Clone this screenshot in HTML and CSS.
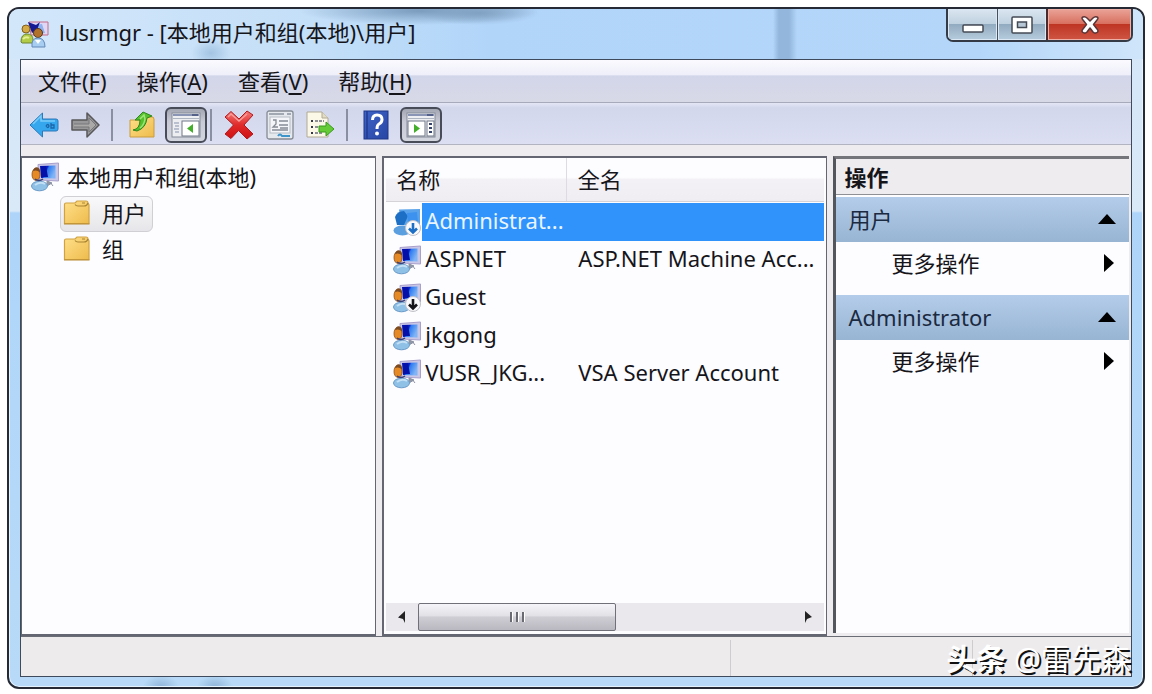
FILE: index.html
```html
<!DOCTYPE html>
<html lang="zh-CN">
<head>
<meta charset="utf-8">
<title>lusrmgr</title>
<link rel="stylesheet" href="styles.css">
</head>
<body>
<svg class="defs" width="0" height="0" aria-hidden="true">
  <defs>
    <linearGradient id="screen" x1="0" y1="0" x2="1" y2="0.4">
      <stop offset="0" stop-color="#0512b8"/><stop offset="0.45" stop-color="#0a1fc8"/><stop offset="0.55" stop-color="#2d7af0"/><stop offset="1" stop-color="#7fb4f6"/>
    </linearGradient>
    <linearGradient id="gold" x1="0" y1="0" x2="1" y2="1">
      <stop offset="0" stop-color="#ffe08a"/><stop offset="1" stop-color="#eebb4c"/>
    </linearGradient>
    <linearGradient id="red" x1="0" y1="0" x2="0" y2="1">
      <stop offset="0" stop-color="#f47a78"/><stop offset="0.5" stop-color="#e02a2a"/><stop offset="1" stop-color="#cf0f12"/>
    </linearGradient>
    <linearGradient id="book" x1="0" y1="0" x2="1" y2="1">
      <stop offset="0" stop-color="#3f63c8"/><stop offset="1" stop-color="#2746a4"/>
    </linearGradient>
    <symbol id="user" viewBox="0 0 30 30">
      <path d="M8 2.500 L28.500 1 L28.500 19 L9 18Z" fill="#c9c6e6" stroke="#a9a0cc" stroke-width="1"/>
      <path d="M10 4 L25.500 3.500 L25.500 16.500 L11 16Z" fill="url(#screen)"/>
      <path d="M11 4 L16 4 L18 15 L11 15Z" fill="#0510a8"/>
      <path d="M17 19 L22 21 L17 24Z M20 20 l3 4" fill="#9098a8" stroke="#8a92a4"/>
      <ellipse cx="9.500" cy="24" rx="8" ry="4.800" fill="#8fc0e6" stroke="#6a9bc8"/>
      <path d="M5 23 q5 -4 10 -1" fill="none" stroke="#c3e0f4" stroke-width="2"/>
      <ellipse cx="6" cy="12.500" rx="4" ry="6" fill="#e58a25" stroke="#8a4a18" stroke-width="0.800"/>
      <path d="M3 9 q1 -4.500 5 -3.500 q2.500 1.500 2 5 q-3 -3 -7 -1.500Z" fill="#7c4a20"/>
      <path d="M5 17 q4 3 8 0" fill="none" stroke="#33427c" stroke-width="1.500"/>
    </symbol>
    <symbol id="user-selected" viewBox="0 0 30 30">
      <path d="M7 2.500 L28 2 L28 18.500 L9 18Z" fill="#5aa3ea"/>
      <ellipse cx="10.500" cy="23.500" rx="9" ry="5" fill="#5c9fe0"/>
      <path d="M3 10 Q5 4 12 4 L16 9 L12 18 L5 18Z" fill="#1d6fc6"/>
      <path d="M15 6 L25 5 L26 15 L16 16Z" fill="#3c92ee"/>
    </symbol>
    <symbol id="down" viewBox="0 0 18 18">
      <circle cx="9" cy="9" r="7.500" fill="#fafafc" stroke="#c0c2c8"/>
      <path d="M9 4 V13 M5 9.500 L9 13.500 L13 9.500" fill="none" stroke="currentColor" stroke-width="2.600"/>
    </symbol>
    <symbol id="folder" viewBox="0 0 28 26">
      <path d="M1.500 4.500 q0 -1.500 1.500 -1.500 L12 3 L14 1 L23 1 Q25 1 25 3 L26 5 L26 23.500 L1.500 23.500Z" fill="url(#gold)" stroke="#d0a244" stroke-width="1.200"/>
      <path d="M12 4.500 q1 1.500 3 1.500 h6 q3 0 4 -3" fill="none" stroke="#a98432" stroke-width="1.200"/>
      <path d="M19 3 h3" stroke="#a98432"/>
      <path d="M1 24 H26.500" stroke="#b98a30"/>
    </symbol>
  </defs>
</svg>

<main class="window">
  <header class="titlebar">
    <svg class="app-icon" viewBox="0 0 30 28" aria-hidden="true">
      <path d="M9 2 H28 V15 H11Z" fill="#dfd8f4" stroke="#c46a8a"/>
      <path d="M14 5 L22 4 L25 13 L16 14Z" fill="#8fb2ee"/>
      <path d="M8 2 L16 5 L20 2 L17 10 L12 13Z" fill="#151a94"/>
      <circle cx="6" cy="9" r="4" fill="#d5a944" stroke="#80601c"/>
      <path d="M1 22 q0 -8 6 -8 q6 0 6 6 v3 H2Z" fill="#b3cc48" stroke="#6f8730"/>
      <path d="M3 19 q3 -3 6 -1" stroke="#e4ef96" stroke-width="2" fill="none"/>
      <circle cx="18" cy="13" r="4.500" fill="#b0712c" stroke="#58371c"/>
      <path d="M12 27 q-1 -9 6 -9 q7 0 7 9Z" fill="#a7cdf0" stroke="#6288b8"/>
      <path d="M15 20 l3 4 l3 -4" fill="#fff"/>
    </svg>
    <h1 class="title">lusrmgr - [本地用户和组(本地)\用户]</h1>
    <div class="caption">
      <button class="caption-button minimize" aria-label="最小化"><svg width="24" height="12" viewBox="0 0 24 12"><rect x="2" y="2" width="20" height="7" rx="1" fill="#fff" stroke="#454b55" stroke-width="1.500"/></svg></button>
      <button class="caption-button maximize" aria-label="最大化"><svg width="24" height="20" viewBox="0 0 24 20"><rect x="2" y="2" width="20" height="16" rx="1" fill="#fff" stroke="#454b55" stroke-width="1.500"/><rect x="7.500" y="7" width="9" height="5.500" fill="#b9c8d6" stroke="#454b55" stroke-width="1.500"/></svg></button>
      <button class="caption-button close" aria-label="关闭"><svg width="22" height="20" viewBox="0 0 22 20"><path d="M4 2 Q6 1 8 3 L11 6 L14 3 Q16 1 18 2 Q20 3 18 5 L14.500 9.500 L18 14 Q20 16 18 17.500 Q16 19 14 17 L11 13 L8 17 Q6 19 4 17.500 Q2 16 4 14 L7.500 9.500 L4 5 Q2 3 4 2Z" fill="#fff" stroke="#5a3638" stroke-width="1.500" stroke-linejoin="round"/></svg></button>
    </div>
  </header>

  <div class="client">
    <nav class="menubar">
      <button class="menu">文件(<u>F</u>)</button>
      <button class="menu">操作(<u>A</u>)</button>
      <button class="menu">查看(<u>V</u>)</button>
      <button class="menu">帮助(<u>H</u>)</button>
    </nav>

    <div class="toolbar" role="toolbar">
      <button class="tool" aria-label="后退"><svg width="30" height="28" viewBox="0 0 30 28"><path d="M1 14 L13.500 2 V8 H27 Q29 8 29 10 V18 Q29 20 27 20 H13.500 V26Z" fill="#35a7ee" stroke="#2c79b8"/><path d="M4 13 L12 5 V10 H26" fill="none" stroke="#7acbf8" stroke-width="1.500"/><path d="M17 15 q2 -3 3 0 q-1 3 -3 0 M22 12 v5 h3 v-3 h-3" fill="none" stroke="#1c65a8" stroke-width="1.300"/></svg></button>
      <button class="tool" aria-label="前进"><svg width="30" height="28" viewBox="0 0 30 28"><path d="M29 14 L17 2 V9 H2 V19 H17 V26Z" fill="#98989a" stroke="#58585a" stroke-width="1.500" stroke-linejoin="round"/><path d="M4 13 H19 V7 L26 14 L19 21 V16 H4" fill="#aaa9a8" stroke="#77777a"/></svg></button>
      <span class="divider"></span>
      <button class="tool up" aria-label="上一级"><svg width="28" height="28" viewBox="0 0 28 28"><path d="M2 9 L16 9 L18 6 H25 L26 8 V26 H2Z" fill="url(#gold)" stroke="#c99c40"/><path d="M5 19 Q12 18 12 9 H7 L15 1 L24 5 L19 7 Q18 17 9 20Z" fill="#55c22c" stroke="#2f861c"/><path d="M12 8 L16 4 L17 8 Q16 14 12 17" fill="none" stroke="#a2e37c" stroke-width="1.500"/></svg></button>
      <button class="tool pressed" aria-label="显示控制台树" aria-pressed="true"><svg width="30" height="26" viewBox="0 0 30 26"><rect x="1" y="1" width="28" height="24" fill="#eceef2" stroke="#858c99"/><path d="M2 3 H28" stroke="#8a95b5" stroke-width="2"/><path d="M21 3 h6" stroke="#44517c" stroke-width="1.500"/><path d="M2 6.500 H28" stroke="#aeb5c2"/><path d="M3 11 h5 M4 14 h4 M3 17 h5 M4 20 h4" stroke="#8593ad"/><rect x="11" y="9" width="17" height="15" fill="#fff" stroke="#6f7786"/><path d="M22 12 V21 L16 16.500Z" fill="#42ae2a"/></svg></button>
      <span class="divider"></span>
      <button class="tool" aria-label="删除"><svg width="32" height="30" viewBox="0 0 32 30"><path d="M2 7 L8 1.500 L16 9 L24 1 L30 5 L21 15 L30 24 L24 29 L15.500 20.500 L8 28.500 L2 24 L10.500 15Z" fill="url(#red)" stroke="#b01a1c" stroke-linejoin="round"/><path d="M5 7 L8 4 L16 11 L24 4" fill="none" stroke="#fa9c98" stroke-width="1.500"/></svg></button>
      <button class="tool" aria-label="属性"><svg width="28" height="30" viewBox="0 0 28 30"><rect x="1" y="1" width="26" height="28" rx="2" fill="#e5e8ed" stroke="#858b94" stroke-width="1.300"/><path d="M3 4 H18 M21 4 h4" stroke="#8c929d" stroke-width="1.500"/><rect x="4" y="7" width="20" height="16" fill="#f4f5f8" stroke="#b5bbc4"/><path d="M7 10 h3 v4 l-3 3 h5 M13 11 h9 M13 15 h9 M14 18 h8 M6 20 h16" fill="none" stroke="#858b94" stroke-width="1.300"/><path d="M12 26 q2 -3 4 0 h8" fill="none" stroke="#3e95ca" stroke-width="2"/></svg></button>
      <button class="tool" aria-label="导出列表"><svg width="30" height="30" viewBox="0 0 30 30"><path d="M2 2 H17 L23 8 V27 H2Z" fill="#fbf8e8" stroke="#b0aa94"/><path d="M17 2 V8 H23" fill="#e3dcc5" stroke="#b0aa94"/><path d="M6 11 h2 M6 17 h2 M6 23 h2" stroke="#34384c" stroke-width="2"/><path d="M10 11 h9 M10 17 h6 M10 23 h7" stroke="#6b6d78" stroke-width="1.500" stroke-dasharray="3 1"/><path d="M14 16 H21 V12 L29 19 L21 26 V22 H14Z" fill="#65cc37" stroke="#3b9a1e"/></svg></button>
      <span class="divider"></span>
      <button class="tool help" aria-label="帮助"><svg width="26" height="30" viewBox="0 0 26 30"><rect x="1" y="1" width="24" height="28" fill="url(#book)" stroke="#1f3686"/><path d="M4 1 V29" stroke="#203a90" stroke-width="1.500"/><path d="M9.500 10 Q9.500 5 14 5 Q19 5 19 9.500 Q19 12.500 16 14 Q14 15 14 19" fill="none" stroke="#fff" stroke-width="3"/><circle cx="14" cy="23.500" r="2" fill="#fff"/></svg></button>
      <button class="tool pressed" aria-label="显示操作窗格" aria-pressed="true"><svg width="30" height="26" viewBox="0 0 30 26"><rect x="1" y="1" width="28" height="24" fill="#eceef2" stroke="#858c99"/><path d="M2 3 H28" stroke="#8a95b5" stroke-width="2"/><path d="M21 3 h6" stroke="#44517c" stroke-width="1.500"/><path d="M2 6.500 H28" stroke="#aeb5c2"/><rect x="2" y="9" width="17" height="15" fill="#fff" stroke="#6f7786"/><path d="M8 12 V21 L14 16.500Z" fill="#42ae2a"/><rect x="21" y="9" width="7" height="15" fill="#fff" stroke="#6f7786"/><path d="M23 12 h3 M23 16 h3 M23 20 h3" stroke="#34426c" stroke-width="2"/></svg></button>
    </div>

    <div class="panes">
      <section class="pane tree-pane">
        <ul class="tree">
          <li>
            <button class="node"><svg class="user-icon"><use href="#user"/></svg>本地用户和组(本地)</button>
            <ul class="tree branch">
              <li><button class="node child selected"><svg class="folder-icon"><use href="#folder"/></svg>用户</button></li>
              <li><button class="node child"><svg class="folder-icon"><use href="#folder"/></svg>组</button></li>
            </ul>
          </li>
        </ul>
      </section>

      <section class="pane list-pane">
        <table class="list">
          <thead><tr><th class="name-col">名称</th><th>全名</th></tr></thead>
          <tbody>
            <tr class="chosen"><td><div class="entry"><span class="avatar"><svg class="user-icon"><use href="#user-selected"/></svg><svg class="mark"><use href="#down"/></svg></span><span class="label">Administrat...</span></div></td><td></td></tr>
            <tr><td><div class="entry"><span class="avatar"><svg class="user-icon"><use href="#user"/></svg></span><span class="label">ASPNET</span></div></td><td>ASP.NET Machine Acc...</td></tr>
            <tr><td><div class="entry"><span class="avatar"><svg class="user-icon"><use href="#user"/></svg><svg class="mark"><use href="#down"/></svg></span><span class="label">Guest</span></div></td><td></td></tr>
            <tr><td><div class="entry"><span class="avatar"><svg class="user-icon"><use href="#user"/></svg></span><span class="label">jkgong</span></div></td><td></td></tr>
            <tr><td><div class="entry"><span class="avatar"><svg class="user-icon"><use href="#user"/></svg></span><span class="label">VUSR_JKG...</span></div></td><td>VSA Server Account</td></tr>
          </tbody>
        </table>
        <div class="scrollbar">
          <button class="arrow" aria-label="向左滚动"><svg width="10" height="14" viewBox="0 0 10 14"><path d="M8 1 V13 L6 9 L1 7.500Z" fill="#222"/></svg></button>
          <div class="track"><div class="thumb"><i></i><i></i><i></i></div></div>
          <button class="arrow" aria-label="向右滚动"><svg width="10" height="14" viewBox="0 0 10 14"><path d="M2 1 V13 L4 9 L9 7Z" fill="#222"/></svg></button>
        </div>
      </section>

      <aside class="actions-pane">
        <h2 class="actions-title">操作</h2>
        <button class="group">用户<svg width="18" height="10" viewBox="0 0 18 10"><path d="M0 10 L9 0 L18 10Z"/></svg></button>
        <button class="more">更多操作<svg width="10" height="18" viewBox="0 0 10 18"><path d="M0 0 L10 9 L0 18Z"/></svg></button>
        <button class="group">Administrator<svg width="18" height="10" viewBox="0 0 18 10"><path d="M0 10 L9 0 L18 10Z"/></svg></button>
        <button class="more">更多操作<svg width="10" height="18" viewBox="0 0 10 18"><path d="M0 0 L10 9 L0 18Z"/></svg></button>
      </aside>
    </div>

    <footer class="statusbar">
      <span class="cell wide"></span><span class="cell middle"></span><span class="cell"></span>
      <span class="credit"><b>头条</b> @雷先森</span>
    </footer>
  </div>
</main>
</body>
</html>
```
FILE: styles.css
```css
* { box-sizing: border-box; }

body {
  margin: 0;
  min-height: 100vh;
  display: flex;
  padding: 7px 7px 5px;
  background: #fff;
  color: #15151a;
  font: 22px/32px "Noto Sans", "Noto Sans CJK SC", sans-serif;
}

button {
  margin: 0;
  padding: 0;
  border: 0;
  background: none;
  color: inherit;
  font: inherit;
  text-align: left;
}

ul { margin: 0; padding: 0; list-style: none; }
svg { display: block; flex: none; }
.defs { position: absolute; }

.window {
  flex: 1;
  display: flex;
  flex-direction: column;
  border: 2px solid #252a34;
  border-radius: 12px;
  background:
    radial-gradient(ellipse 18px 12px at 152px 100%, #8fb4d8, transparent),
    radial-gradient(ellipse 18px 12px at 206px 100%, #8fb4d8, transparent),
    linear-gradient(#d3e6f8 0, #d9e9f8 202px, #aed5f9 204px, #b8daf8 100%);
  box-shadow: inset 0 0 0 1px #e6f3fd;
}

/* Title bar */
.titlebar {
  height: 50px;
  display: flex;
  align-items: center;
  padding: 0 10px 0 11px;
  border-radius: 10px 10px 0 0;
  background:
    radial-gradient(ellipse 120px 14px at 410px 2px, #7b9cbd, transparent),
    radial-gradient(ellipse 60px 12px at 470px 4px, #86a6c6, transparent),
    radial-gradient(ellipse 20px 14px at 202px 44px, #a3c4e2, transparent),
    linear-gradient(90deg, transparent 764px, #92b6dc 770px, #92b6dc 780px, transparent 788px),
    linear-gradient(90deg, #d3e7fa, #c4dff8 300px, #b1d5f9 480px, #b3d6f9 85%, #cfe5fa);
}
.app-icon { width: 30px; height: 28px; margin-right: 9px; }
.title { flex: 1; margin: 0; padding-bottom: 4px; font-size: 22px; font-weight: 400; white-space: nowrap; }
.caption {
  align-self: flex-start;
  display: flex;
  height: 33px;
  border: 2px solid #343b46;
  border-top: 0;
  border-radius: 0 0 7px 7px;
  overflow: hidden;
}
.caption-button {
  width: 49px;
  display: flex;
  align-items: center;
  justify-content: center;
  background: linear-gradient(#dbe7f1, #bfd0df 48%, #93abc0 50%, #b6ccde);
  box-shadow: inset 0 0 0 1px #dce9f4;
}
.minimize { padding-top: 8px; }
.maximize { border-left: 1px solid #47505c; }
.close {
  width: 85px;
  border-left: 2px solid #4a2a2c;
  background: linear-gradient(#eaa398, #d8705f 48%, #bf3524 50%, #cf5543);
  box-shadow: inset 0 0 0 1px #eeb0a6;
}

/* Client area */
.client {
  flex: 1;
  display: flex;
  flex-direction: column;
  margin: 0 11px 10px;
  border: 1px solid #3f4a5c;
  background: #efecf0;
}
.menubar {
  height: 43px;
  display: flex;
  align-items: center;
  gap: 30px;
  padding: 0 17px;
  border-bottom: 1px solid #a7aabb;
  background: linear-gradient(#fbfaff, #eeeff9 35%, #d2d6e9 38%, #d8d9e7);
}
.menu u { text-underline-offset: 3px; text-decoration-thickness: 2px; }
.toolbar {
  height: 42px;
  display: flex;
  align-items: center;
  gap: 11px;
  padding: 3px 8px 0;
  border-bottom: 1px solid #b2b4c2;
  background: linear-gradient(#e4e6f4, #d2d7ec 12%, #dcdff2);
}
.tool { display: flex; align-items: center; justify-content: center; }
.up { margin: 0 -2px 0 4px; }
.help { margin-left: 4px; }
.pressed {
  width: 42px;
  height: 36px;
  border: 2px solid #484c58;
  border-radius: 6px;
  background: linear-gradient(#a3a6b3, #c8cbd5 40%, #d3d5df);
}
.divider { width: 2px; height: 32px; background: #8a8fa2; }
.pressed + .divider { margin: 0 0 0 -8px; }

/* Panes */
.panes {
  flex: 1;
  display: grid;
  grid-template-columns: 356fr 445fr 297fr;
  gap: 6px;
  padding: 11px 2px 0 0;
}
.pane { min-width: 0; border: 2px solid #646771; border-right-width: 1px; background: #fdfcff; }
.tree-pane { border-left-width: 1px; padding: 0 8px; }
.node { display: flex; align-items: center; gap: 7px; height: 38px; white-space: nowrap; }
.branch { padding-left: 30px; }
.child { height: 36px; padding: 0 6px 2px 2px; gap: 11px; border: 1px solid transparent; border-radius: 6px; }
.selected { border-color: #cfcfd4; background: linear-gradient(#f9f9fb, #e6e6ea); }
.user-icon { width: 30px; height: 30px; }
.folder-icon { width: 28px; height: 26px; }

.list-pane { display: flex; flex-direction: column; justify-content: space-between; padding: 0 2px 3px; }
.list { width: 100%; table-layout: fixed; border-collapse: collapse; white-space: nowrap; }
.list th {
  height: 43px;
  padding: 0 11px;
  font-weight: 400;
  text-align: left;
  background: linear-gradient(#fdfcff 45%, #f3f1f5 50%, #efedf1);
  border-bottom: 1px solid #d5d3d8;
}
.list .name-col { width: 180px; padding-left: 10px; border-right: 1px solid #dddce2; }
.list tbody::before { content: ""; display: block; height: 1px; }
.list td { height: 38px; padding: 0 0 3px 12px; }
.list td:first-child { padding: 0 0 0 6px; }
.entry { display: flex; align-items: center; height: 38px; }
.avatar { position: relative; flex: none; color: #15151a; }
.mark { position: absolute; right: 0; bottom: 0; width: 18px; height: 18px; }
.label { flex: 1; padding: 0 0 3px 3px; line-height: 35px; }
.chosen { color: #eaf5ff; }
.chosen .label, .chosen td + td { background: #3093fc; }
.chosen .avatar { color: #1d6fc6; }

.scrollbar { display: flex; height: 28px; background: #eae8ec; }
.arrow { width: 32px; display: flex; align-items: center; justify-content: center; }
.track { flex: 1; display: flex; }
.thumb {
  width: 53%;
  display: flex;
  gap: 3px;
  align-items: center;
  justify-content: center;
  border: 1px solid #6f7078;
  border-radius: 2px;
  background: linear-gradient(#f5f4f8, #e2e1e6 45%, #cfced5 50%, #b9b8c0);
}
.thumb i { width: 3px; height: 10px; background: #6a6a72; border-right: 1px solid #fff; }

.actions-pane {
  display: flex;
  flex-direction: column;
  margin-bottom: 3px;
  border-top: 3px solid #74757b;
  border-left: 3px solid #54565e;
  background: #fdfcff;
}
.actions-title {
  height: 36px;
  margin: 0 0 2px;
  padding: 2px 9px;
  border-bottom: 1px solid #8f9096;
  background: #efecef;
  font-size: 22px;
  font-weight: 700;
}
.group, .more { display: flex; align-items: center; justify-content: space-between; }
.group {
  height: 45px;
  padding: 0 13px 2px;
  color: #1b2a40;
  background: linear-gradient(#b3cce9, #98b5d4);
  fill: #000;
}
.more { height: 42px; margin-bottom: 11px; padding: 0 15px 0 56px; }

/* Status bar */
.statusbar {
  position: relative;
  height: 40px;
  display: flex;
  padding-top: 3px;
  border-top: 1px solid #6b6d76;
  background: #eeebed;
}
.cell { flex: 158; }
.wide { flex: 710; border-right: 1px solid #cfccd0; }
.middle { flex: 242; border-right: 1px solid #cfccd0; }
.credit {
  position: absolute;
  right: 0;
  top: 2px;
  color: #fff;
  font-size: 30px;
  line-height: 40px;
  text-shadow: 2px 2px 0 #111;
  white-space: nowrap;
}
```
